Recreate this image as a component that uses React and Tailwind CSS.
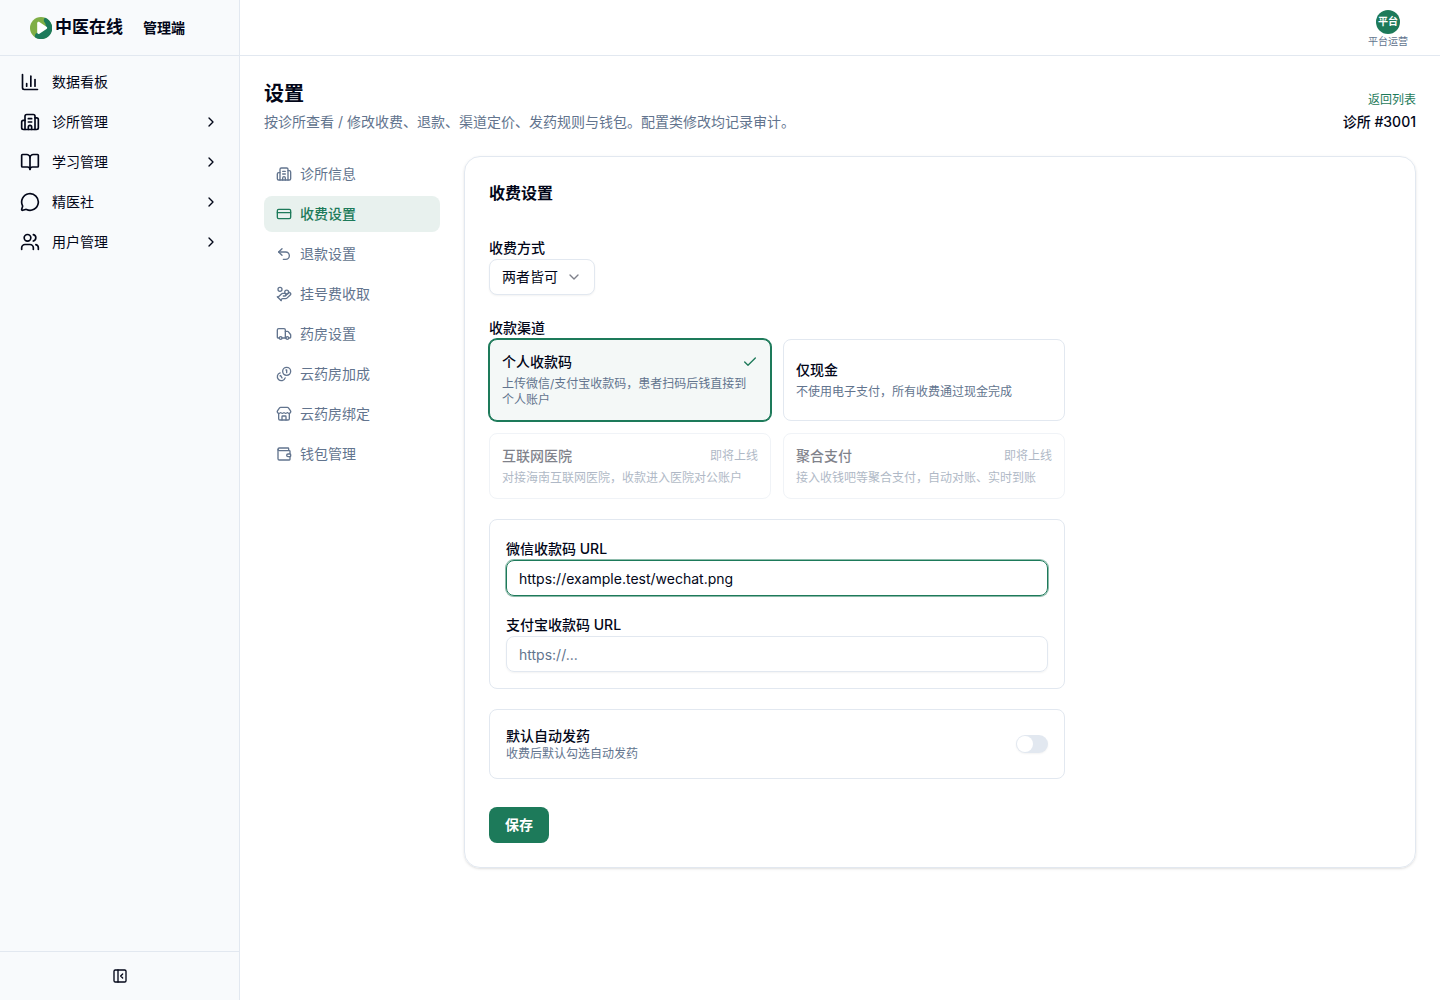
import { useState } from 'react'
import {
  BookOpen,
  Building2,
  ChartColumn,
  Check,
  ChevronDown,
  ChevronRight,
  CreditCard,
  HandCoins,
  MessageCircle,
  PanelLeftClose,
  Store,
  Truck,
  Undo2,
  Users,
  Wallet,
} from 'lucide-react'

const MENU = [
  { label: '数据看板', icon: ChartColumn },
  { label: '诊所管理', icon: Building2, children: true },
  { label: '学习管理', icon: BookOpen, children: true },
  { label: '精医社', icon: MessageCircle, children: true },
  { label: '用户管理', icon: Users, children: true },
]

const TABS = [
  { label: '诊所信息', icon: Building2 },
  { label: '收费设置', icon: CreditCard },
  { label: '退款设置', icon: Undo2 },
  { label: '挂号费收取', icon: HandCoins },
  { label: '药房设置', icon: Truck },
  { label: '云药房加成', icon: CoinPair },
  { label: '云药房绑定', icon: Store },
  { label: '钱包管理', icon: Wallet },
]

const CHANNELS = [
  { id: 'personal', title: '个人收款码', desc: '上传微信/支付宝收款码，患者扫码后钱直接到个人账户' },
  { id: 'cash', title: '仅现金', desc: '不使用电子支付，所有收费通过现金完成' },
  { id: 'hospital', title: '互联网医院', desc: '对接海南互联网医院，收款进入医院对公账户', soon: true },
  { id: 'aggregate', title: '聚合支付', desc: '接入收钱吧等聚合支付，自动对账、实时到账', soon: true },
]

function CoinPair({ size = 24 }) {
  return (
    <svg
      width={size}
      height={size}
      viewBox="0 0 24 24"
      fill="none"
      stroke="currentColor"
      strokeWidth="2"
      strokeLinecap="round"
      strokeLinejoin="round"
      aria-hidden="true"
    >
      <path d="M13.744 17.736a6 6 0 1 1-7.48-7.48" />
      <path d="M15 6h1v4" />
      <path d="m6.134 14.768.866-.5 2 3.464" />
      <circle cx="16" cy="8" r="6" />
    </svg>
  )
}

function LogoMark() {
  return (
    <svg viewBox="0 0 22 22" className="size-[22px]" aria-hidden="true">
      <circle cx="11" cy="11" r="11" fill="#7fae45" />
      <path d="M15 .8A11 11 0 1 1 5 20.200C4.500 17.500 6 15.500 8.500 15.500 14 15.500 18.500 10 14 4.500 13.500 3 14 1.500 15 .8z" fill="#1d7a5a" />
      <path d="M7.200 6.300c0-1.200 1.200-1.800 2.200-1.200l7.100 4.600c.9.600.9 1.800 0 2.400l-7.100 4.600c-1 .6-2.200 0-2.200-1.200z" fill="#fff" />
    </svg>
  )
}

function Sidebar() {
  return (
    <aside className="flex w-60 shrink-0 flex-col border-r border-slate-200 bg-slate-50">
      <div className="flex h-14 items-center border-b border-slate-200 px-[30px]">
        <LogoMark />
        <span className="ml-[3px] text-[17px] font-semibold">中医在线</span>
        <span className="ml-5 text-sm font-semibold">管理端</span>
      </div>

      <nav className="flex flex-1 flex-col gap-1 p-2">
        {MENU.map(({ label, icon: Icon, children }) => (
          <button key={label} type="button" className="flex h-9 items-center gap-3 rounded-lg px-3 text-sm hover:bg-slate-100">
            <Icon size={20} />
            <span className="flex-1 text-left">{label}</span>
            {children && <ChevronRight size={16} />}
          </button>
        ))}
      </nav>

      <div className="flex h-[49px] items-center justify-center border-t border-slate-200">
        <button type="button" aria-label="收起侧边栏">
          <PanelLeftClose size={16} />
        </button>
      </div>
    </aside>
  )
}

function Topbar() {
  return (
    <header className="flex h-14 shrink-0 items-center justify-end border-b border-slate-200 px-6">
      <button type="button" className="flex flex-col items-center gap-0.5 px-2">
        <span className="flex size-6 items-center justify-center rounded-full bg-[#1d7a5a] text-[10px] font-semibold text-white">
          平台
        </span>
        <span className="text-[10px] leading-none text-slate-500">平台运营</span>
      </button>
    </header>
  )
}

function SettingsNav({ active, onChange }) {
  return (
    <nav className="flex w-44 shrink-0 flex-col gap-1">
      {TABS.map(({ label, icon: Icon }) => (
        <button
          key={label}
          type="button"
          onClick={() => onChange(label)}
          className={
            label === active
              ? 'flex h-9 items-center gap-2 rounded-lg bg-[#e8f1ee] px-3 text-sm font-medium text-[#1d7a5a]'
              : 'flex h-9 items-center gap-2 rounded-lg px-3 text-sm text-slate-500'
          }
        >
          <Icon size={16} />
          {label}
        </button>
      ))}
    </nav>
  )
}

function ChannelCard({ channel, selected, onSelect }) {
  return (
    <button
      type="button"
      disabled={channel.soon}
      aria-pressed={selected}
      onClick={() => onSelect(channel.id)}
      className={
        selected
          ? 'rounded-lg border border-[#1d7a5a] bg-[#f4f8f7] p-3 text-left ring-1 ring-[#1d7a5a]'
          : 'rounded-lg border border-slate-200 p-3 text-left disabled:opacity-50'
      }
    >
      <span className="flex items-center justify-between">
        <span className="text-sm font-medium">{channel.title}</span>
        {selected && <Check size={16} className="text-[#1d7a5a]" />}
        {channel.soon && <span className="text-xs text-slate-500">即将上线</span>}
      </span>
      <span className="mt-1 block text-xs text-slate-500">{channel.desc}</span>
    </button>
  )
}

function UrlField({ id, label, ...props }) {
  return (
    <div>
      <label htmlFor={id} className="text-sm font-medium">{label}</label>
      <input
        id={id}
        type="text"
        className="block h-9 w-full rounded-lg border border-slate-200 px-3 text-sm shadow-xs outline-none placeholder:text-slate-500 focus:border-[#1d7a5a] focus:ring-1 focus:ring-[#1d7a5a]/50"
        {...props}
      />
    </div>
  )
}

function BillingForm() {
  const [channel, setChannel] = useState('personal')
  const [wechat, setWechat] = useState('https://example.test/wechat.png')
  const [alipay, setAlipay] = useState('')

  return (
    <form className="flex max-w-xl flex-col gap-5" onSubmit={e => e.preventDefault()}>
      <div>
        <label htmlFor="mode" className="text-sm font-medium">收费方式</label>
        <div className="relative w-fit">
          <select
            id="mode"
            defaultValue="both"
            className="block h-9 appearance-none rounded-lg border border-slate-200 bg-white pr-9 pl-3 text-sm shadow-xs"
          >
            <option value="both">两者皆可</option>
            <option value="before">先付</option>
            <option value="after">后付</option>
          </select>
          <ChevronDown size={16} className="pointer-events-none absolute top-2.5 right-[13px] opacity-50" />
        </div>
      </div>

      <div>
        <span id="channel-label" className="text-sm font-medium">收款渠道</span>
        <div role="group" aria-labelledby="channel-label" className="grid grid-cols-2 gap-3">
          {CHANNELS.map(item => (
            <ChannelCard key={item.id} channel={item} selected={item.id === channel} onSelect={setChannel} />
          ))}
        </div>
      </div>

      <div className="flex flex-col gap-4 rounded-lg border border-slate-200 p-4">
        <UrlField
          id="wechat"
          label="微信收款码 URL"
          placeholder="https://..."
          value={wechat}
          onChange={e => setWechat(e.target.value)}
          autoFocus
        />
        <UrlField
          id="alipay"
          label="支付宝收款码 URL"
          placeholder="https://..."
          value={alipay}
          onChange={e => setAlipay(e.target.value)}
        />
      </div>

      <div className="flex items-center justify-between rounded-lg border border-slate-200 p-4">
        <div>
          <label htmlFor="auto" className="block text-sm font-medium">默认自动发药</label>
          <p className="text-xs text-slate-500">收费后默认勾选自动发药</p>
        </div>
        <input
          id="auto"
          type="checkbox"
          role="switch"
          className="flex h-[18px] w-8 appearance-none items-center rounded-full bg-slate-200 px-px shadow-xs before:size-4 before:rounded-full before:bg-white checked:bg-[#1d7a5a] checked:before:ml-auto"
        />
      </div>

      <div className="pt-2">
        <button type="submit" className="block h-9 rounded-lg bg-[#1d7a5a] px-4 text-sm font-semibold text-white">
          保存
        </button>
      </div>
    </form>
  )
}

export default function App() {
  const [tab, setTab] = useState('收费设置')

  return (
    <div lang="zh-CN" className="flex min-h-screen bg-white font-['Inter','Noto_Sans_CJK_SC',sans-serif] text-slate-950">
      <Sidebar />
      <div className="flex min-w-0 flex-1 flex-col">
        <Topbar />
        <main className="flex flex-col gap-6 p-6">
          <div className="flex items-end justify-between">
            <div>
              <h1 className="text-xl font-semibold">设置</h1>
              <p className="mt-1 text-sm text-slate-500">
                按诊所查看 / 修改收费、退款、渠道定价、发药规则与钱包。配置类修改均记录审计。
              </p>
            </div>
            <div className="text-right">
              <a href="#list" className="block text-xs text-[#1d7a5a]">返回列表</a>
              <p className="mt-1 text-sm font-medium">诊所 #3001</p>
            </div>
          </div>

          <div className="flex items-start gap-6">
            <SettingsNav active={tab} onChange={setTab} />
            <section className="min-w-0 flex-1 rounded-2xl border border-slate-200 p-6 shadow-sm">
              <h2 className="mb-[30px] text-base font-semibold">收费设置</h2>
              <BillingForm />
            </section>
          </div>
        </main>
      </div>
    </div>
  )
}
